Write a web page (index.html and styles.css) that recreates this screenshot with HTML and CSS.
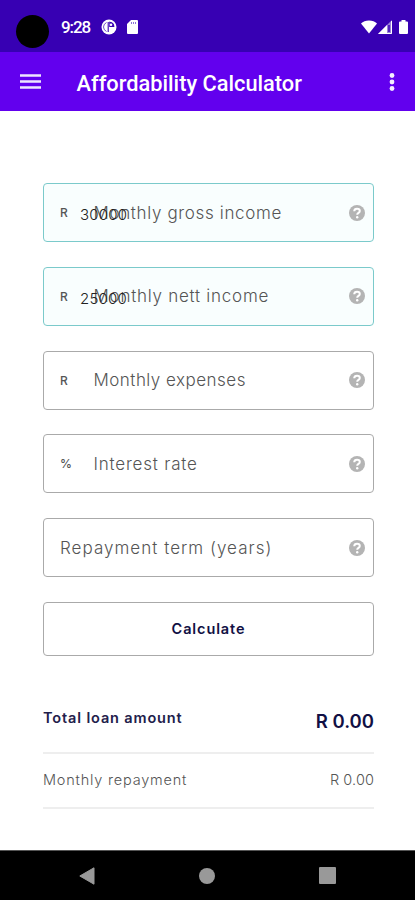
FILE: index.html
```
<!DOCTYPE html>
<html lang="en">
<head>
<meta charset="utf-8">
<meta name="viewport" content="width=device-width, initial-scale=1">
<title>Affordability Calculator</title>
<link rel="stylesheet" href="styles.css">
</head>
<body>
<svg width="0" height="0" class="defs" aria-hidden="true">
  <symbol id="help" viewBox="0 0 16 16">
    <circle cx="8" cy="8" r="8" fill="#b4b4b4"/>
    <path d="M5.200 6.300C5.300 4.600 6.400 3.800 8 3.800c1.700 0 2.800.8 2.800 2.200 0 1.900-2.600 1.900-2.600 3.700" fill="none" stroke="#fff" stroke-width="2"/>
    <circle cx="8.200" cy="12.200" r="1.200" fill="#fff"/>
  </symbol>
</svg>
<header>
  <div class="status">
    <span class="camera"></span>
    <span class="time">9:28</span>
    <svg class="app" width="16" height="16" viewBox="0 0 16 16"><circle cx="8" cy="8" r="7.500" fill="#fff"/><path d="M7.200 3v10M8.800 3.200q4 .6 4 4.300H8.800z" fill="#3700b3" stroke="#3700b3" stroke-width="1.100"/><path d="M5.500 3.500Q2.500 5 2.500 8t3 4.500" fill="none" stroke="#3700b3" stroke-width=".7"/><circle cx="10" cy="5.700" r="1.300" fill="#fff"/></svg>
    <svg class="card" width="11" height="14" viewBox="0 0 11 14"><path d="M4 0h6q1 0 1 1v12q0 1-1 1H1q-1 0-1-1V4z" fill="#fff"/><path d="M4.500 2v2M6.500 2v2M8.500 2v2" stroke="#8d72d8"/></svg>
    <span class="grow"></span>
    <svg width="16" height="14" viewBox="0 0 16 14"><path d="M0 3.500Q3 .5 8 .5t8 3L8 13.500z" fill="#fff"/></svg>
    <svg class="signal" width="14" height="14" viewBox="0 0 14 14"><path d="M14 0v14H0z" fill="#fff" fill-opacity=".5"/><path d="M9 5v9H0z" fill="#fff"/><path d="M13.500 1v12.500H9" fill="none" stroke="#fff"/><path d="M11 5v7" stroke="#3700b3" stroke-width="1.500"/></svg>
    <svg class="battery" width="9" height="14" viewBox="0 0 9 14"><path d="M2.500 0h4v1.500H8q1 0 1 1V13q0 1-1 1H1q-1 0-1-1V2.500q0-1 1-1h1.500z" fill="#fff"/></svg>
  </div>
  <div class="appbar">
    <svg width="21" height="15" viewBox="0 0 21 15"><path d="M0 1.500h21M0 7.500h21M0 13.500h21" stroke="#eee5ff" stroke-width="2.400"/></svg>
    <h1>Affordability Calculator</h1>
    <svg width="6" height="18" viewBox="0 0 6 18"><g fill="#f4edff"><circle cx="3" cy="2.500" r="2.400"/><circle cx="3" cy="9" r="2.400"/><circle cx="3" cy="15.500" r="2.400"/></g></svg>
  </div>
</header>
<main>
  <div class="field filled"><span class="unit">R</span><span class="label gross">Monthly gross income</span><span class="value">30000</span><svg class="help"><use href="#help"/></svg></div>
  <div class="field filled"><span class="unit">R</span><span class="label nett">Monthly nett income</span><span class="value">25000</span><svg class="help"><use href="#help"/></svg></div>
  <div class="field"><span class="unit">R</span><span class="label expenses">Monthly expenses</span><svg class="help"><use href="#help"/></svg></div>
  <div class="field"><span class="unit">%</span><span class="label rate">Interest rate</span><svg class="help"><use href="#help"/></svg></div>
  <div class="field"><span class="label term">Repayment term (years)</span><svg class="help"><use href="#help"/></svg></div>
  <button>Calculate</button>
  <div class="total"><span>Total loan amount</span><strong>R 0.00</strong></div>
  <div class="repayment"><span>Monthly repayment</span><span class="amount">R 0.00</span></div>
</main>
<nav>
  <svg width="16" height="18" viewBox="0 0 16 18"><path d="M15 .8v16.400L.8 9z" fill="#999" stroke="#999" stroke-linejoin="round"/></svg>
  <svg width="16" height="16" viewBox="0 0 16 16"><circle cx="8" cy="8" r="8" fill="#999"/></svg>
  <svg width="17" height="17" viewBox="0 0 17 17"><rect width="17" height="17" rx="1" fill="#999"/></svg>
</nav>
</body>
</html>
```
FILE: styles.css
```
* { box-sizing: border-box; }
body { margin: 0; height: 900px; display: flex; flex-direction: column; background: #fff; font-family: Inter, sans-serif; overflow: hidden; }
svg { display: block; flex: none; }
.defs { position: absolute; }
header { font-family: Roboto, sans-serif; color: #fff; }
.status { height: 52px; background: #3700b3; display: flex; align-items: center; padding: 2px 7px 0 16px; }
.camera { width: 33px; height: 33px; border-radius: 50%; background: #000; margin-top: 9px; }
.time { font-size: 17px; font-weight: 500; margin-left: 12px; width: 40px; letter-spacing: -1.100px; }
.card { margin-left: 10px; }
.grow { flex: 1; }
.signal { margin-left: 1px; }
.battery { margin-left: 7px; }
.appbar { height: 59px; background: #6200ee; display: flex; align-items: center; padding: 0 20px; }
h1 { flex: 1; margin: 4px 0 0 35.500px; font-size: 21.800px; font-weight: 500; }
main { flex: 1; padding: 72px 41px 0 43px; display: flex; flex-direction: column; }
.field { position: relative; height: 59px; margin-bottom: 24.800px; border: 1px solid #aaa; border-radius: 4px; display: flex; align-items: center; padding: 0 8px 0 16px; flex: none; }
.filled { border-color: #7bcacb; background: #f9fefe; }
.unit { width: 33.500px; font-size: 12px; font-weight: 500; color: #555; }
.label { flex: 1; font-size: 17px; font-weight: 300; color: #555; white-space: nowrap; }
.gross { letter-spacing: .65px; }
.nett { letter-spacing: .75px; }
.expenses { letter-spacing: .48px; }
.rate { letter-spacing: .8px; }
.term { letter-spacing: 1.030px; }
.value { position: absolute; left: 36px; top: 21px; font-size: 15px; line-height: 20px; font-weight: 300; letter-spacing: .2px; color: #222; }
.help { width: 16px; height: 16px; }
button { height: 54px; flex: none; border: 1px solid #aaa; border-radius: 4px; background: #fff; font: 600 14.500px Inter, sans-serif; letter-spacing: .9px; color: #111044; }
.total { height: 98px; flex: none; display: flex; justify-content: space-between; align-items: center; padding-top: 34px; border-bottom: 2px solid #eee; font-size: 14.500px; font-weight: 600; letter-spacing: .86px; color: #22204b; }
.total span { margin-top: -6px; }
.total strong { font-size: 18.500px; font-weight: 600; letter-spacing: 0; color: #111044; margin-top: 1px; }
.repayment { height: 55px; flex: none; display: flex; justify-content: space-between; align-items: center; padding-bottom: 2px; border-bottom: 2px solid #eee; font-size: 14.500px; font-weight: 300; letter-spacing: .8px; color: #555; }
.repayment .amount { letter-spacing: .1px; }
nav { height: 50px; flex: none; background: #000; border-top: 1px solid #555; display: flex; align-items: center; justify-content: space-between; padding: 0 79px; }
```
